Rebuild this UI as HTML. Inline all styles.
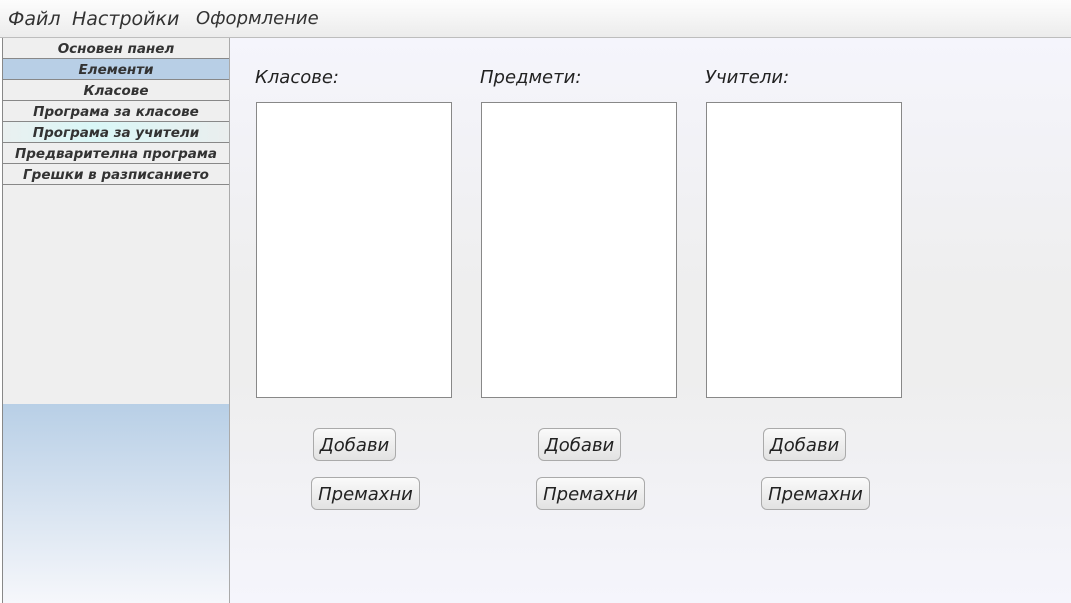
<!DOCTYPE html><html><head><meta charset="utf-8"><style>
body{margin:0;width:1071px;height:603px;overflow:hidden;font-family:"DejaVu Sans","Liberation Sans",sans-serif;background:#fff;position:relative}
.menu{position:absolute;left:0;top:0;width:1071px;height:37px;background:linear-gradient(#fdfdfd,#ececec);border-bottom:1px solid #bdbdbd;font-style:oblique;font-size:19px;color:#333}
.menu span{position:absolute;top:8px}
.side{position:absolute;left:2px;top:38px;width:226px;height:565px;background:linear-gradient(#efefef 0,#efefef 366px,#b8cfe6 366px,#f6f7fb 565px);border-right:1px solid #aaa;border-left:1px solid #888}
.it{height:20px;border-bottom:1px solid #888;text-align:center;font:italic bold 13.5px "DejaVu Sans",sans-serif;color:#333;line-height:22px;background:#efefef}
.main{position:absolute;left:230px;top:38px;width:841px;height:565px;background:linear-gradient(#f5f5fc,#eeeeee 45%,#eeeeee 60%,#f5f5fc)}
.lbl{position:absolute;top:67px;font-style:oblique;font-size:18px;color:#222}
.list{position:absolute;top:102px;width:194px;height:294px;background:#fff;border:1px solid #888}
.btn{position:absolute;height:31px;border:1px solid #aaa;border-radius:6px;background:linear-gradient(#fafafa,#e2e2e2);font-style:oblique;font-size:18px;color:#222;line-height:33px;text-align:center;box-sizing:border-box}
</style></head><body>
<div class="menu"><span style="left:8px">Файл</span><span style="left:72px">Настройки</span><span style="left:196px;font-size:18px">Оформление</span></div>
<div class="side">
<div class="it">Основен панел</div>
<div class="it" style="background:#b8cfe6">Елементи</div>
<div class="it">Класове</div>
<div class="it">Програма за класове</div>
<div class="it" style="background:linear-gradient(90deg,#eaf0f0,#d9f7f7 40%,#eaeeee)">Програма за учители</div>
<div class="it">Предварителна програма</div>
<div class="it">Грешки в разписанието</div>
</div>
<div class="main"></div>
<div class="lbl" style="left:255px">Класове:</div>
<div class="lbl" style="left:480px">Предмети:</div>
<div class="lbl" style="left:705px">Учители:</div>
<div class="list" style="left:256px"></div>
<div class="list" style="left:481px"></div>
<div class="list" style="left:706px"></div>
<div class="btn" style="left:313px;top:428px;width:83px;height:33px">Добави</div>
<div class="btn" style="left:538px;top:428px;width:83px;height:33px">Добави</div>
<div class="btn" style="left:763px;top:428px;width:83px;height:33px">Добави</div>
<div class="btn" style="left:311px;top:477px;width:109px;height:33px">Премахни</div>
<div class="btn" style="left:536px;top:477px;width:109px;height:33px">Премахни</div>
<div class="btn" style="left:761px;top:477px;width:109px;height:33px">Премахни</div>
</body></html>
